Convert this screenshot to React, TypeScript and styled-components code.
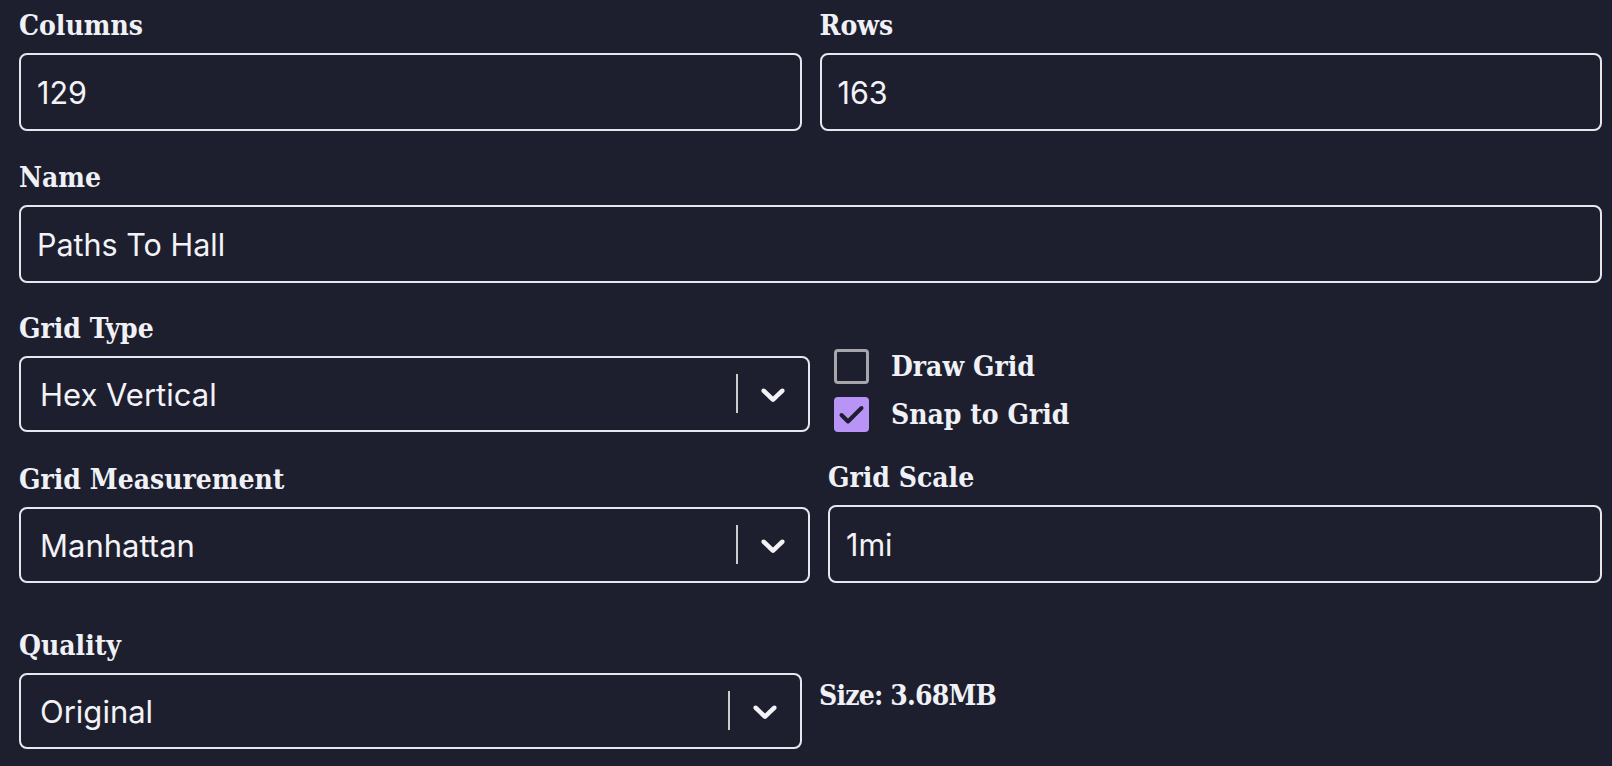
import React from "react"
import styled, { createGlobalStyle } from "styled-components"

const GlobalStyle = createGlobalStyle`
  html, body {
    margin: 0;
    background: #1e1f2e;
  }
  body {
    min-height: 766px;
  }
`

const Form = styled.div`
  display: flex;
  flex-direction: column;
  padding: 9px 10px 0 19px;
  color: #f0f1f7;
`

const Row = styled.div<{ $align?: string; $gap?: number; $top?: number }>`
  display: flex;
  align-items: ${p => p.$align || "flex-end"};
  gap: ${p => p.$gap ?? 18}px;
  margin-top: ${p => p.$top ?? 0}px;
`

const Field = styled.div<{ $width?: number }>`
  display: flex;
  flex-direction: column;
  flex: ${p => (p.$width ? `0 0 ${p.$width}px` : "1 1 0")};
  min-width: 0;
`

const Label = styled.label`
  display: block;
  font-family: "DejaVu Serif", "Liberation Serif", serif;
  font-stretch: condensed;
  font-weight: 700;
  font-size: 28px;
  line-height: 34px;
  margin-bottom: 10px;
  color: #f0f1f7;
`

const TextInput = styled.input`
  box-sizing: border-box;
  width: 100%;
  height: 78px;
  padding: 0 16px;
  border: 2px solid #e6e7ef;
  border-radius: 8px;
  background: transparent;
  color: #f2f2f7;
  font-family: Inter, "Noto Sans", sans-serif;
  font-size: 30.5px;
  outline: none;
`

const SelectBox = styled.div`
  box-sizing: border-box;
  display: flex;
  align-items: center;
  height: 76px;
  border: 2px solid #e6e7ef;
  border-radius: 8px;
`

const SelectValue = styled.span`
  flex: 1;
  padding-left: 19px;
  font-family: Inter, "Noto Sans", sans-serif;
  font-size: 31px;
  color: #f2f2f7;
`

const Separator = styled.span`
  align-self: stretch;
  width: 2px;
  margin: 16px 0 17px;
  background: #cccccc;
`

const Indicator = styled.span`
  display: flex;
  padding: 0 15px;
  color: #f2f2f7;
`

const CheckList = styled.div`
  display: flex;
  flex-direction: column;
  gap: 13px;
  align-self: flex-start;
  margin-top: 37px;
`

const CheckRow = styled.label`
  display: flex;
  align-items: center;
  gap: 22px;
  font-family: "DejaVu Serif", "Liberation Serif", serif;
  font-stretch: condensed;
  font-weight: 700;
  font-size: 28px;
  line-height: 35px;
`

const Box = styled.span<{ $checked?: boolean }>`
  box-sizing: border-box;
  display: flex;
  width: 35px;
  height: 35px;
  border-radius: 4px;
  border: ${p => (p.$checked ? "none" : "3px solid #a7a7ab")};
  background: ${p => (p.$checked ? "#b794f6" : "transparent")};
`

const SizeText = styled.div`
  font-family: "DejaVu Serif", "Liberation Serif", serif;
  font-stretch: condensed;
  font-weight: 700;
  font-size: 28px;
  line-height: 34px;
  letter-spacing: -0.8px;
  margin-top: 50px;
`

const Chevron = () => (
  <svg width="40" height="40" viewBox="0 0 20 20" fill="currentColor">
    <path d="M4.516 7.548c0.436-0.446 1.043-0.481 1.576 0l3.908 3.747 3.908-3.747c0.533-0.481 1.141-0.446 1.574 0 0.436 0.445 0.408 1.197 0 1.615-0.406 0.418-4.695 4.502-4.695 4.502-0.217 0.223-0.502 0.335-0.787 0.335s-0.57-0.112-0.789-0.335c0 0-4.287-4.084-4.695-4.502s-0.436-1.17 0-1.615z" />
  </svg>
)

const Select: React.FC<{ value: string }> = ({ value }) => (
  <SelectBox>
    <SelectValue>{value}</SelectValue>
    <Separator />
    <Indicator>
      <Chevron />
    </Indicator>
  </SelectBox>
)

const Checkbox: React.FC<{ label: string; checked?: boolean }> = ({ label, checked }) => (
  <CheckRow>
    <Box $checked={checked}>
      {checked && (
        <svg width="35" height="35" viewBox="0 0 35 35">
          <path d="M7.5 18 L14 24.5 L27.5 11" fill="none" stroke="#1e1f2e" strokeWidth="4" strokeLinecap="round" strokeLinejoin="round" />
        </svg>
      )}
    </Box>
    {label}
  </CheckRow>
)

const App: React.FC = () => {
  return (
    <>
      <GlobalStyle />
      <Form>
        <Row>
          <Field>
            <Label>Columns</Label>
            <TextInput defaultValue="129" />
          </Field>
          <Field>
            <Label>Rows</Label>
            <TextInput defaultValue="163" />
          </Field>
        </Row>
        <Row $top={30}>
          <Field>
            <Label>Name</Label>
            <TextInput defaultValue="Paths To Hall" />
          </Field>
        </Row>
        <Row $top={29} $gap={24}>
          <Field $width={791}>
            <Label>Grid Type</Label>
            <Select value="Hex Vertical" />
          </Field>
          <CheckList>
            <Checkbox label="Draw Grid" />
            <Checkbox label="Snap to Grid" checked />
          </CheckList>
        </Row>
        <Row $top={29}>
          <Field $width={791}>
            <Label>Grid Measurement</Label>
            <Select value="Manhattan" />
          </Field>
          <Field>
            <Label>Grid Scale</Label>
            <TextInput defaultValue="1mi" />
          </Field>
        </Row>
        <Row $top={46} $align="flex-start" $gap={17}>
          <Field $width={783}>
            <Label>Quality</Label>
            <Select value="Original" />
          </Field>
          <SizeText>Size: 3.68MB</SizeText>
        </Row>
      </Form>
    </>
  )
}

export default App
